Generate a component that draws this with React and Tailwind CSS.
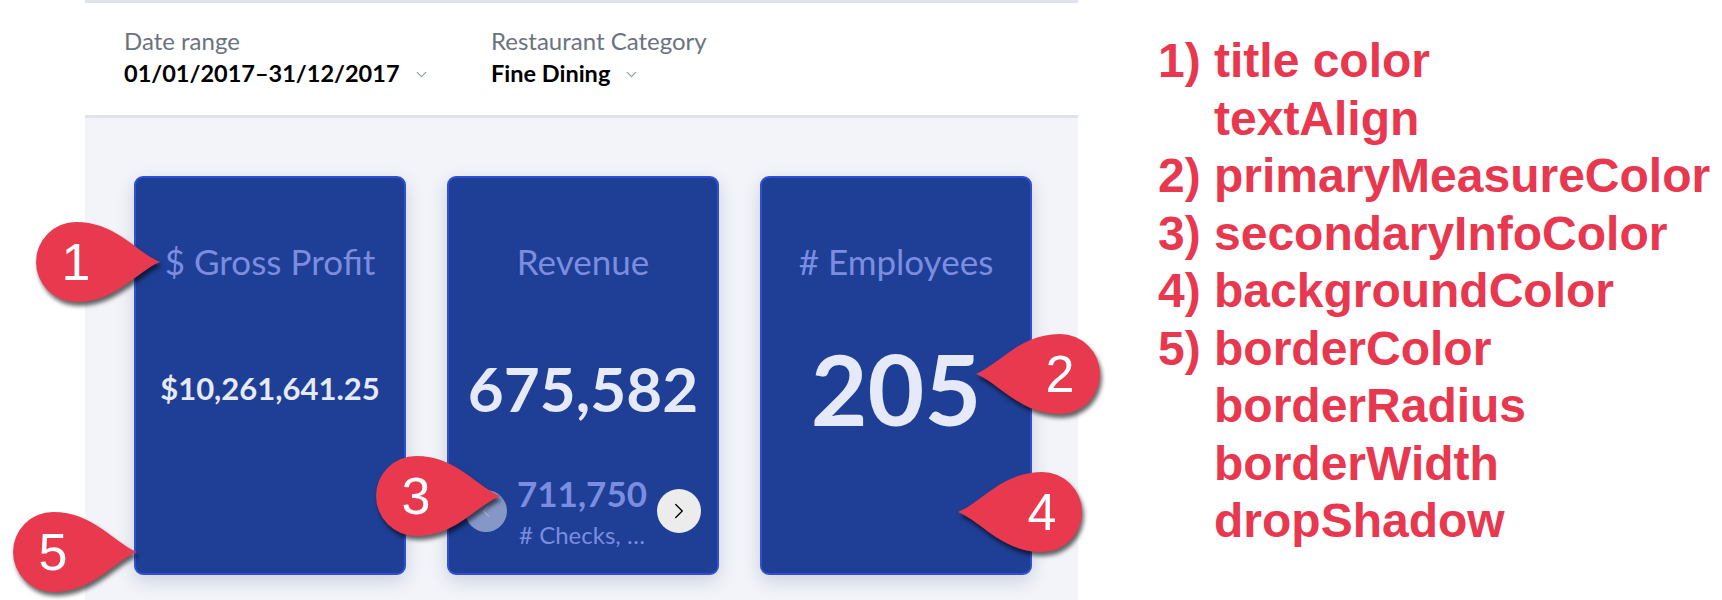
import { ChevronDown, ChevronLeft, ChevronRight } from "lucide-react";

const cardBox =
    "w-[272px] h-[399px] rounded-[9px] border-2 border-[#2f50d6] bg-[#1e3f95] shadow-[0_6px_18px_rgba(40,50,100,0.18)] flex flex-col items-center pt-[63px]";

// -----------------------------
// CALLOUT PIN (red teardrop)
// -----------------------------
const Pin = ({ n, left, className }) => (
    <div className={`absolute w-[132px] h-[88px] ${className}`}>
        <svg
            width="132"
            height="88"
            viewBox={left ? "-88 -44 132 88" : "-44 -44 132 88"}
            className="drop-shadow-[2px_4px_2px_rgba(0,0,0,0.6)]"
        >
            {left ? (
                <path d="M -84 0 C -60 -10 -40 -40 0 -40 A 40 40 0 0 1 0 40 C -40 40 -60 10 -84 0 Z" fill="#e8394f" />
            ) : (
                <path d="M 84 0 C 60 -10 40 -40 0 -40 A 40 40 0 0 0 0 40 C 40 40 60 10 84 0 Z" fill="#e8394f" />
            )}
        </svg>
        <div
            className={`absolute top-0 h-[88px] w-[88px] flex items-center justify-center text-white text-[52px] leading-none font-['Liberation_Sans',Arial,sans-serif] ${left ? "right-0" : "left-0"}`}
        >
            {n}
        </div>
    </div>
);

const Filter = ({ label, value, className }) => (
    <div className={className}>
        <div className="text-[24px] leading-[28px] text-[#6b7280]">{label}</div>
        <div className="mt-[4px] flex items-center gap-[13px]">
            <span className="text-[23.5px] leading-[28px] font-bold text-black">{value}</span>
            <ChevronDown size={17} strokeWidth={1.5} className="text-[#8f98a8] mt-[3px]" />
        </div>
    </div>
);

const Title = ({ children }) => (
    <div className="h-[40px] text-[35px] leading-[40px] text-[#7b8de0] whitespace-nowrap">{children}</div>
);

const App = () => {
    return (
        <div className="relative w-[1722px] h-[600px] bg-white flex overflow-hidden font-['Lato',sans-serif]">
            {/* DASHBOARD */}
            <div className="ml-[85px] w-[993px] flex flex-col">
                <div className="h-[3px] bg-[#dfe3ea]" />
                <div className="h-[112px] pt-[24px] pl-[39px] flex">
                    <Filter label="Date range" value="01/01/2017–31/12/2017" className="w-[367px]" />
                    <Filter label="Restaurant Category" value="Fine Dining" />
                </div>
                <div className="h-[3px] bg-[#dfe3ea]" />

                <div className="flex-1 bg-[#f2f4f9] pt-[58px] pl-[49px] flex gap-[41px]">
                    {/* GROSS PROFIT */}
                    <div className={cardBox}>
                        <Title>$ Gross Profit</Title>
                        <div className="mt-[47px] h-[120px] flex items-center justify-center text-[31px] leading-none font-bold text-[#e6e9f7]">
                            $10,261,641.25
                        </div>
                    </div>

                    {/* REVENUE */}
                    <div className={cardBox}>
                        <Title>Revenue</Title>
                        <div className="mt-[47px] h-[120px] flex items-center justify-center text-[62px] leading-none font-bold text-[#e6e9f7]">
                            675,582
                        </div>
                        <div className="mt-[25px] w-full px-[16px] flex items-center justify-between">
                            <div className="w-[42px] h-[42px] rounded-full bg-[#8597c7] flex items-center justify-center">
                                <ChevronLeft size={20} strokeWidth={1} className="text-[#c9d1e8]" />
                            </div>
                            <div className="flex flex-col items-center">
                                <div className="text-[35px] leading-[40px] font-bold text-[#7b8de0]">711,750</div>
                                <div className="mt-[8px] text-[24px] leading-[28px] text-[#7b8de0] whitespace-nowrap">
                                    # Checks, …
                                </div>
                            </div>
                            <div className="w-[44px] h-[44px] rounded-full bg-[#ececec] flex items-center justify-center">
                                <ChevronRight size={26} strokeWidth={1.25} className="text-black" />
                            </div>
                        </div>
                    </div>

                    {/* EMPLOYEES */}
                    <div className={cardBox}>
                        <Title># Employees</Title>
                        <div className="mt-[47px] h-[120px] flex items-center justify-center text-[98px] leading-none font-bold text-[#e6e9f7]">
                            205
                        </div>
                    </div>
                </div>
            </div>

            {/* LEGEND */}
            <div className="ml-[80px] pt-[32px] font-['Liberation_Sans',Arial,sans-serif] font-bold text-[48px] leading-[57.5px] text-[#e8384f] whitespace-nowrap">
                <div className="flex"><span className="w-[56px]">1)</span>title color</div>
                <div className="pl-[56px]">textAlign</div>
                <div className="flex"><span className="w-[56px]">2)</span>primaryMeasureColor</div>
                <div className="flex"><span className="w-[56px]">3)</span>secondaryInfoColor</div>
                <div className="flex"><span className="w-[56px]">4)</span>backgroundColor</div>
                <div className="flex"><span className="w-[56px]">5)</span>borderColor</div>
                <div className="pl-[56px]">borderRadius</div>
                <div className="pl-[56px]">borderWidth</div>
                <div className="pl-[56px]">dropShadow</div>
            </div>

            {/* CALLOUTS */}
            <Pin n="1" className="left-[32px] top-[218px]" />
            <Pin n="2" left className="left-[972px] top-[330px]" />
            <Pin n="3" className="left-[372px] top-[452px]" />
            <Pin n="4" left className="left-[954px] top-[468px]" />
            <Pin n="5" className="left-[9px] top-[508px]" />
        </div>
    );
};

export default App;
